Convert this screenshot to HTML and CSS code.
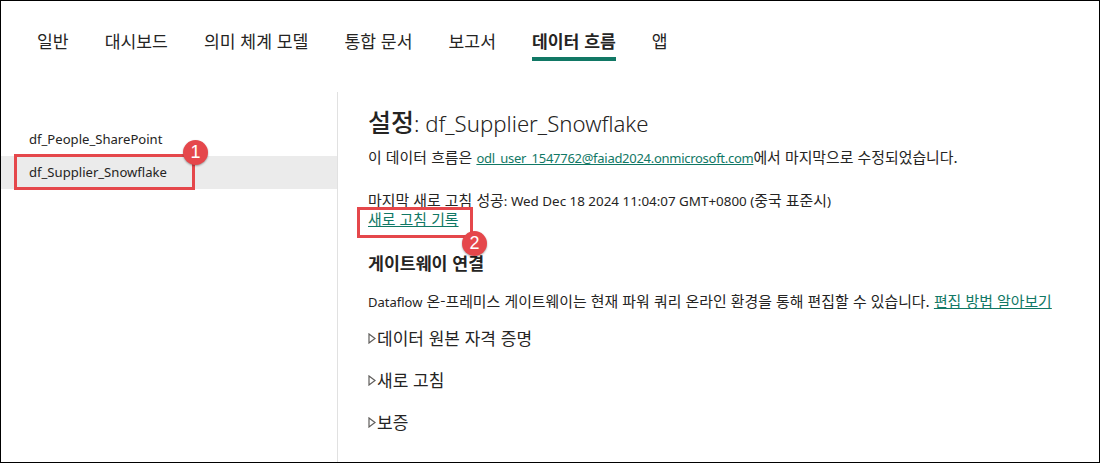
FILE: index.html
```html
<!DOCTYPE html>
<html lang="ko">
<head>
<meta charset="utf-8">
<link rel="stylesheet" href="styles.css">
</head>
<body>
<div class="frame">
  <nav class="tabs">
    <span class="tab">일반</span>
    <span class="tab">대시보드</span>
    <span class="tab">의미 체계 모델</span>
    <span class="tab">통합 문서</span>
    <span class="tab">보고서</span>
    <span class="tab active">데이터 흐름</span>
    <span class="tab">앱</span>
  </nav>
  <div class="main">
    <aside class="side">
      <div class="item">df_People_SharePoint</div>
      <div class="item selected">df_Supplier_Snowflake
        <span class="callout box1"></span>
        <span class="badge badge1">1</span>
      </div>
    </aside>
    <section class="content">
      <h1 class="title"><span class="strong">설정</span><span class="title-en">: df_Supplier_Snowflake</span></h1>
      <p class="line first">이 데이터 흐름은 <a class="link en email">odl_user_1547762@faiad2024.onmicrosoft.com</a>에서 마지막으로 수정되었습니다.</p>
      <p class="line refresh">마지막 새로 고침 성공<span class="en date">: Wed Dec 18 2024 11:04:07 GMT+0800 (</span>중국 표준시<span class="en date">)</span></p>
      <div class="history">
        <a class="link">새로 고침 기록</a>
        <span class="callout box2"></span>
        <span class="badge badge2">2</span>
      </div>
      <h2 class="sub">게이트웨이 연결</h2>
      <p class="line gw"><span class="en">Dataflow</span> 온-프레미스 게이트웨이는 현재 파워 쿼리 온라인 환경을 통해 편집할 수 있습니다. <a class="link">편집 방법 알아보기</a></p>
      <div class="exp"><svg class="tri" width="8" height="11" viewBox="0 0 8 11"><polygon points="1,1 7,5.5 1,10" fill="none" stroke="#605e5c" stroke-width="1.2"/></svg>데이터 원본 자격 증명</div>
      <div class="exp"><svg class="tri" width="8" height="11" viewBox="0 0 8 11"><polygon points="1,1 7,5.5 1,10" fill="none" stroke="#605e5c" stroke-width="1.2"/></svg>새로 고침</div>
      <div class="exp"><svg class="tri" width="8" height="11" viewBox="0 0 8 11"><polygon points="1,1 7,5.5 1,10" fill="none" stroke="#605e5c" stroke-width="1.2"/></svg>보증</div>
    </section>
  </div>
</div>
</body>
</html>
```

FILE: styles.css
```css
* { box-sizing: border-box; }
html, body { margin: 0; padding: 0; background: #fff; }
body {
  font-family: "Noto Sans CJK KR", "Noto Sans", sans-serif;
  color: #252423;
}
.frame {
  width: 1100px;
  height: 463px;
  border: 1px solid #000;
  display: flex;
  flex-direction: column;
  overflow: hidden;
}
.tabs {
  display: flex;
  gap: 36px;
  padding: 27px 0 0 36px;
  height: 91px;
}
.tab {
  font-size: 17.2px;
  line-height: 26px;
  height: 33px;
  color: #252423;
  border-bottom: 4px solid transparent;
}
.tab.active {
  font-weight: 700;
  border-bottom-color: #117865;
}
.main {
  display: flex;
  flex: 1;
}
.side {
  width: 337px;
  border-right: 1px solid #e1e1e1;
  padding-top: 31px;
}
.item {
  position: relative;
  height: 33px;
  line-height: 33px;
  padding-left: 28px;
  font-family: "Noto Sans", sans-serif;
  font-size: 13.1px;
}
.item.selected { background: #ebebeb; }
.callout {
  position: absolute;
  border: 3px solid #e5474b;
}
.box1 { left: 13px; top: -2px; width: 181px; height: 36px; }
.badge {
  position: absolute;
  width: 25px;
  height: 25px;
  border-radius: 50%;
  background: #e5474b;
  color: #fff;
  font-family: "Liberation Sans", "Noto Sans", sans-serif;
  font-size: 18px;
  line-height: 25px;
  text-align: center;
  box-shadow: 0 1px 2px rgba(0,0,0,0.35);
}
.badge1 { left: 182px; top: -16px; }
.content {
  flex: 1;
  padding-left: 30px;
  padding-top: 12px;
}
.title {
  margin: 0;
  font-size: 25px;
  font-weight: 500;
  line-height: 34px;
  color: #252423;
}
.title-en {
  font-family: "Noto Sans", sans-serif;
  font-size: 22.2px;
  font-weight: 300;
  line-height: 1;
}
.line {
  margin: 0;
  font-size: 14.9px;
  line-height: 20px;
}
.en {
  font-family: "Noto Sans", sans-serif;
  font-size: 13px;
  line-height: 1;
}
.email { letter-spacing: -0.28px; }
.date { font-size: 13.4px; }
.first { margin-top: 9px; }
.refresh { margin-top: 23px; }
.link {
  color: #117865;
  text-decoration: underline;
}
.history {
  position: relative;
  font-size: 14.9px;
  line-height: 18px;
  width: max-content;
}
.box2 { left: -11px; top: -3px; width: 116px; height: 31px; }
.badge2 { left: 94px; top: 21px; }
.sub {
  margin: 23px 0 0;
  font-size: 17.3px;
  font-weight: 700;
  line-height: 24px;
}
.gw { margin-top: 16px; }
.exp {
  display: flex;
  align-items: center;
  font-size: 17px;
  line-height: 22px;
  margin-top: 16px;
}
.exp + .exp { margin-top: 20px; }
.tri { margin-right: 1px; }
```
